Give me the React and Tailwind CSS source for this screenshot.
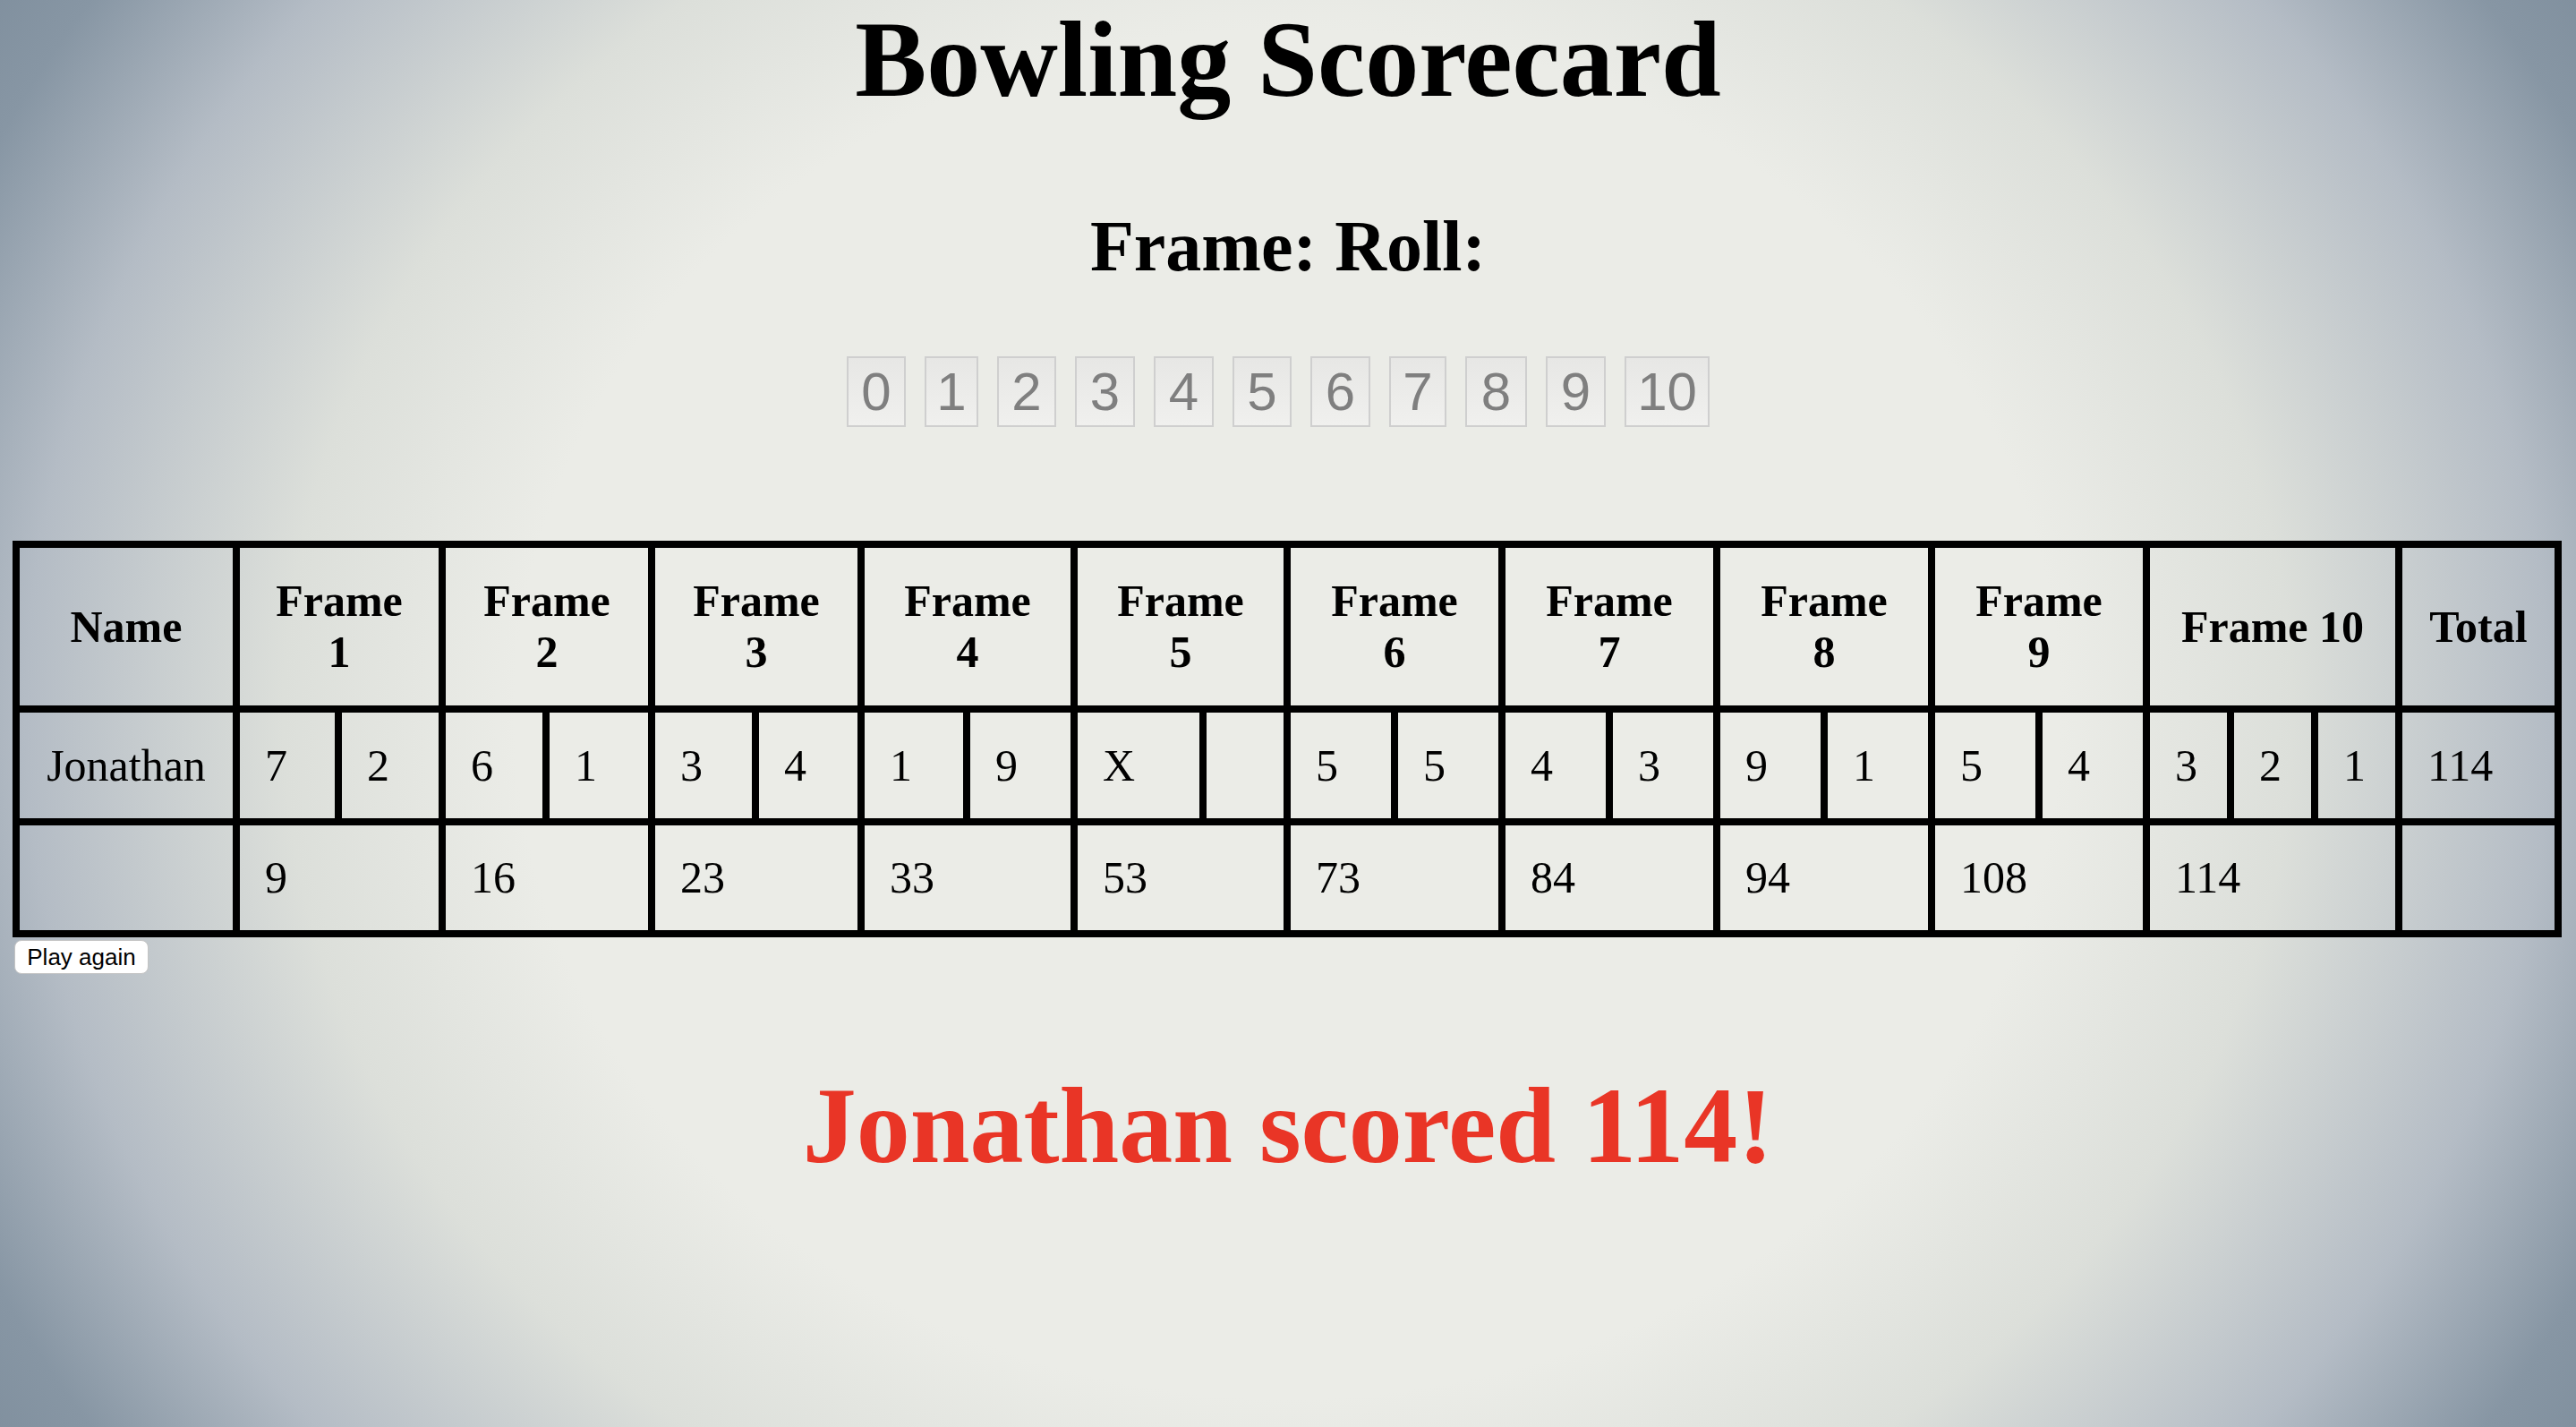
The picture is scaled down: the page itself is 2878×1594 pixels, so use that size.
const frames = [
  { rolls: ["7", "2"], total: 9 },
  { rolls: ["6", "1"], total: 16 },
  { rolls: ["3", "4"], total: 23 },
  { rolls: ["1", "9"], total: 33 },
  { rolls: ["X", ""], total: 53 },
  { rolls: ["5", "5"], total: 73 },
  { rolls: ["4", "3"], total: 84 },
  { rolls: ["9", "1"], total: 94 },
  { rolls: ["5", "4"], total: 108 },
  { rolls: ["3", "2", "1"], total: 114 },
];

// widths taken from the reference, the "1" key is a bit narrower
const pins = [
  { label: "0", w: "w-[66px]" },
  { label: "1", w: "w-[60px]" },
  { label: "2", w: "w-[66px]" },
  { label: "3", w: "w-[67px]" },
  { label: "4", w: "w-[67px]" },
  { label: "5", w: "w-[66px]" },
  { label: "6", w: "w-[67px]" },
  { label: "7", w: "w-[64px]" },
  { label: "8", w: "w-[69px]" },
  { label: "9", w: "w-[67px]" },
  { label: "10", w: "w-[95px]" },
];

const cell = "border-r-[8px] border-b-[8px] border-black text-[50px] leading-[57px]";
const head = `${cell} flex flex-col items-center justify-center text-center font-bold whitespace-nowrap`;
const body = `${cell} flex items-center pl-[28px]`;

export default function App() {
  return (
    <div className="min-h-screen w-full flex flex-col bg-[radial-gradient(ellipse_1439px_1275px_at_center,#ebece7_60%,#dcdfda_78%,#b4bcc5_98%,#8796a4_112%,#7a8a99_125%)] font-['Liberation_Serif','Times_New_Roman',serif] text-black">
      <h1 className="text-[120px] leading-[134px] font-bold text-center">Bowling Scorecard</h1>
      <h2 className="mt-[101px] text-[80px] leading-[80px] font-bold text-center">Frame: Roll:</h2>

      <div className="mt-[83px] flex justify-center gap-[21px] pr-[22px]">
        {pins.map((p) => (
          <button
            key={p.label}
            type="button"
            disabled
            className={`${p.w} h-[79px] flex items-center justify-center border-2 border-[#cfcfcf] bg-linear-to-b from-[#e7e7e5] to-[#f0f0ee] text-[#7f7f7f] text-[60px] leading-none font-['Liberation_Sans',Arial,sans-serif]`}
          >
            {p.label}
          </button>
        ))}
      </div>

      <div className="mt-[127px] ml-[14px] w-[2848px] grid grid-cols-[246px_114px_116px_116px_118px_116px_118px_118px_120px_144px_94px_120px_120px_120px_120px_120px_120px_120px_120px_94px_94px_94px_178px] grid-rows-[184px_126px_125px] border-l-[8px] border-t-[8px] border-black">
        {/* header */}
        <div className={head}>Name</div>
        {frames.map((f, i) =>
          i < 9 ? (
            <div key={i} className={`${head} col-span-2`}>
              <span>Frame</span>
              <span>{i + 1}</span>
            </div>
          ) : (
            <div key={i} className={`${head} col-span-3`}>
              Frame {i + 1}
            </div>
          )
        )}
        <div className={head}>Total</div>

        {/* rolls */}
        <div className={`${cell} flex items-center justify-center`}>Jonathan</div>
        {frames.map((f, i) =>
          f.rolls.map((r, j) => (
            <div key={`${i}-${j}`} className={body}>
              {r}
            </div>
          ))
        )}
        <div className={body}>114</div>

        {/* running totals */}
        <div className={cell}></div>
        {frames.map((f, i) => (
          <div key={i} className={`${body} ${i < 9 ? "col-span-2" : "col-span-3"}`}>
            {f.total}
          </div>
        ))}
        <div className={cell}></div>
      </div>

      <button
        type="button"
        className="mt-[3px] ml-[16px] self-start w-[150px] h-[38px] bg-white border border-[#c4c4c4] rounded-[8px] text-[26px] leading-none text-black font-['Liberation_Sans',Arial,sans-serif]"
      >
        Play again
      </button>

      <p className="mt-[110px] text-[120px] leading-[120px] font-bold text-center text-[#e93526]">
        Jonathan scored 114!
      </p>
    </div>
  );
}
